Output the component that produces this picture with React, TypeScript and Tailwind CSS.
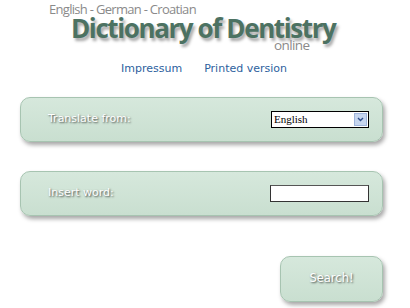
export default function App() {
  return (
    <div className="w-[410px] h-[308px] bg-white overflow-hidden" style={{ fontFamily: "'DejaVu Sans', Verdana, sans-serif" }}>
      <div className="relative h-[56px]">
        <div className="absolute left-[49px] top-[3px] text-[13px] leading-none tracking-[-0.7px] text-[#8a8a8a]" style={{ fontFamily: "'Open Sans', sans-serif" }}>
          English - German - Croatian
        </div>
        <div
          className="absolute left-[71px] top-[17px] text-[26px] font-bold leading-[22px] tracking-[-1.4px] text-[#4c7262]"
          style={{ fontFamily: "'Open Sans', sans-serif", textShadow: "2px 3px 3px rgba(0,0,0,0.35)" }}
        >
          Dictionary of Dentistry
        </div>
        <div className="absolute left-[274px] top-[39px] text-[13.5px] leading-none tracking-[-0.6px] text-[#8a8a8a]" style={{ fontFamily: "'Open Sans', sans-serif" }}>
          online
        </div>
      </div>
      <div className="flex gap-[22px] pl-[121px] text-[11px] text-[#2d5f9e] leading-none mt-[7px]">
        <span>Impressum</span>
        <span>Printed version</span>
      </div>
      <div className="ml-[20px] w-[363px] mt-[23px] flex flex-col">
        <div className="h-[45px] rounded-[10px] border border-[#a7c4b1] bg-gradient-to-b from-[#d6e8dc] to-[#c9dfd0] shadow-[2px_3px_4px_rgba(0,0,0,0.35)] flex items-center justify-between pl-[27px] pr-[13px]">
          <span className="text-[11px] text-white" style={{ textShadow: "1px 1px 2px rgba(0,0,0,0.7)" }}>Translate from:</span>
          <div className="w-[98px] h-[17px] border border-black bg-white flex items-center justify-between pl-[2px] pr-[1px]">
            <span className="text-[11px] leading-none text-black" style={{ fontFamily: "'Liberation Serif', serif" }}>English</span>
            <span className="w-[13px] h-[13px] bg-[#c6d6ef] border border-[#9fb5dc] flex items-center justify-center">
              <svg width="7" height="5" viewBox="0 0 7 5"><path d="M1 1 L3.5 3.5 L6 1" stroke="#2c4d8a" strokeWidth="1.4" fill="none" /></svg>
            </span>
          </div>
        </div>
        <div className="h-[45px] mt-[29px] rounded-[10px] border border-[#a7c4b1] bg-gradient-to-b from-[#d6e8dc] to-[#c9dfd0] shadow-[2px_3px_4px_rgba(0,0,0,0.35)] flex items-center justify-between pl-[27px] pr-[13px]">
          <span className="text-[11px] text-white" style={{ textShadow: "1px 1px 2px rgba(0,0,0,0.7)" }}>Insert word:</span>
          <div className="w-[99px] h-[17px] border border-[#333] border-t-[#555] bg-white" />
        </div>
        <div className="self-end w-[103px] h-[46px] mt-[40px] rounded-[10px] border border-[#a7c4b1] bg-gradient-to-b from-[#d6e8dc] to-[#c9dfd0] shadow-[2px_3px_4px_rgba(0,0,0,0.35)] flex items-center justify-center">
          <span className="text-[11.5px] text-white" style={{ textShadow: "1px 1px 2px rgba(0,0,0,0.7)" }}>Search!</span>
        </div>
      </div>
    </div>
  );
}
